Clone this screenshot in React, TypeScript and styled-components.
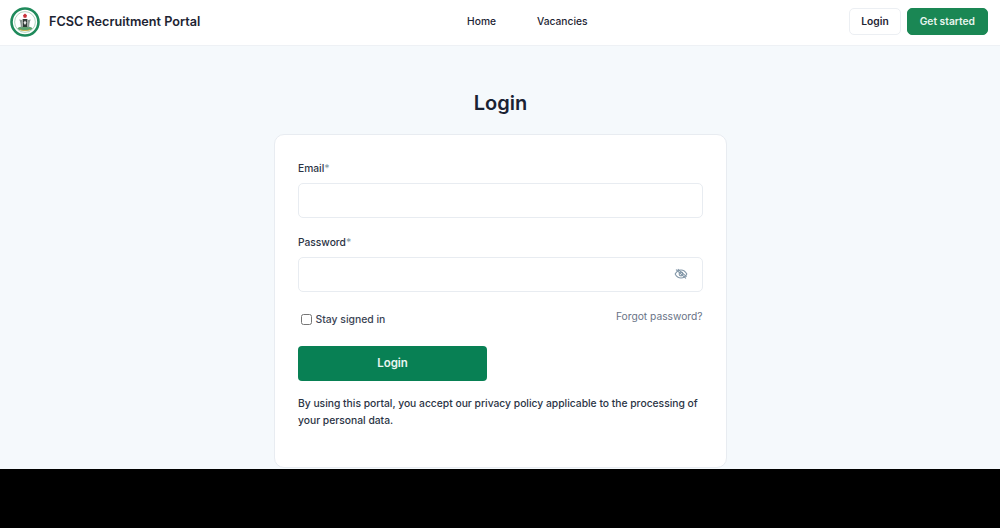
import React, { FC } from 'react';
import styled, { createGlobalStyle } from 'styled-components';

const GlobalStyle = createGlobalStyle`
  html, body {
    margin: 0;
    height: 100%;
    background: #000;
  }
  * {
    box-sizing: border-box;
  }
`;

const Page = styled.div`
  height: 469px;
  overflow: hidden;
  display: flex;
  flex-direction: column;
  background: #f5f9fc;
  font-family: Inter, "Liberation Sans", sans-serif;
  color: #1a2233;
`;

const Header = styled.header`
  height: 46px;
  flex: none;
  display: flex;
  justify-content: space-between;
  align-items: center;
  padding: 0 12px 2px 10px;
  background: #fff;
  border-bottom: 1px solid #eef1f5;
`;

const Brand = styled.div`
  display: flex;
  align-items: center;
  gap: 9px;
  font-size: 12.65px;
  font-weight: 600;
  color: #1d2433;
`;

const Nav = styled.nav`
  display: flex;
  gap: 41px;
  margin: 0 0 1px 5px;
  font-size: 10.24px;
  font-weight: 500;
  color: #1d2433;
`;

const Actions = styled.div`
  display: flex;
  gap: 6px;
`;

const HeaderButton = styled.button<{ $primary?: boolean }>`
  height: 27px;
  padding: 0 ${(p) => (p.$primary ? '12px' : '11px')} 1px;
  border-radius: 5px;
  border: 1px solid ${(p) => (p.$primary ? '#1a8754' : '#eceff3')};
  background: ${(p) => (p.$primary ? '#1a8754' : '#fff')};
  color: ${(p) => (p.$primary ? '#e8f5ee' : '#1d2433')};
  font-family: inherit;
  font-size: 10.24px;
  font-weight: 600;
`;

const Main = styled.main`
  display: flex;
  flex-direction: column;
  align-items: center;
  padding-top: 43px;
`;

const Title = styled.h1`
  margin: 0 0 16px 1px;
  font-size: 20px;
  line-height: 29px;
  font-weight: 600;
  color: #1a2233;
`;

const Card = styled.form`
  width: 453px;
  height: 334px;
  flex: none;
  padding: 25px 23px 0 23.5px;
  background: #fff;
  border: 1px solid #e8ecf1;
  border-radius: 10px;
`;

const Field = styled.div`
  margin-bottom: 16px;
`;

const Label = styled.label`
  display: block;
  margin-bottom: 6px;
  font-size: 10.24px;
  line-height: 17px;
  font-weight: 500;
  color: #2b3445;

  & > span {
    color: #8aa0a8;
  }
`;

const InputWrap = styled.div`
  position: relative;
`;

const Input = styled.input`
  display: block;
  width: 100%;
  height: 35px;
  border: 1px solid #e8ecf1;
  border-radius: 5px;
  background: #fff;
  outline: none;
`;

const EyeToggle = styled.span`
  position: absolute;
  right: 15px;
  top: 10px;
  display: flex;
  color: #8095a6;
`;

const OptionsRow = styled.div`
  display: flex;
  justify-content: space-between;
  align-items: flex-start;
  margin-top: -2px;
`;

const StayLabel = styled.label`
  display: flex;
  align-items: center;
  gap: 4px;
  padding: 5px 0 0 2.5px;
  font-size: 10.4px;
  line-height: 17px;
  font-weight: 500;
  color: #3a4354;
`;

const Checkbox = styled.input`
  width: 11px;
  height: 11px;
  margin: 0;
`;

const ForgotLink = styled.a`
  padding-top: 2px;
  font-size: 10.24px;
  line-height: 17px;
  color: #697386;
`;

const SubmitButton = styled.button`
  display: block;
  width: 189px;
  height: 35px;
  margin-top: 17.5px;
  padding: 0 0 1px;
  border: none;
  border-radius: 4px;
  background: #088054;
  color: #e9f6f0;
  font-family: inherit;
  font-size: 11.5px;
  font-weight: 600;
`;

const Notice = styled.p`
  margin: 14.5px 0 0;
  font-size: 10.3px;
  line-height: 16.5px;
  font-weight: 500;
  color: #2b3445;
`;

// rough redraw of the coat of arms badge
const CrestLogo: FC = () => (
  <svg width="30" height="30" viewBox="0 0 30 30" aria-hidden="true">
    <circle cx="15" cy="15" r="13.5" fill="#fff" stroke="#1f8a5b" strokeWidth="2.6" />
    <circle cx="15" cy="15" r="10.4" fill="#fff" stroke="#9cc9ae" strokeWidth="0.8" />
    <ellipse cx="15" cy="21.5" rx="7.5" ry="2" fill="#5da36f" />
    <path d="M12.6 12h4.8v8h-4.8z" fill="#2f3a35" />
    <path d="M15 13.4l1.5 2.3-1.5 2.3-1.5-2.3z" fill="#e6e6e6" />
    <path d="M9.2 12.5c1.2 2 1.6 5 1.6 8h1.4v-7.5z" fill="#8b9a94" />
    <path d="M20.8 12.5c-1.2 2-1.6 5-1.6 8h-1.4v-7.5z" fill="#8b9a94" />
    <path d="M13 8.2l2-1.6 2 1.6-.7 2.6h-2.6z" fill="#c8323a" />
    <path d="M10 22.7c3 1.2 7 1.2 10 0" fill="none" stroke="#d8a93a" strokeWidth="0.8" />
  </svg>
);

const EyeOffIcon: FC = () => (
  <svg width="14" height="14" viewBox="0 0 24 24" fill="none" stroke="currentColor" strokeWidth="1.8" strokeLinecap="round" strokeLinejoin="round" aria-hidden="true">
    <path d="M2 12s3.6-7 10-7 10 7 10 7-3.6 7-10 7-10-7-10-7z" />
    <circle cx="12" cy="12" r="3.2" />
    <path d="M4 5l16 14" />
    <path d="M7 4l14 12" />
  </svg>
);

const App: FC = () => (
  <>
    <GlobalStyle />
    <Page>
      <Header>
        <Brand>
          <CrestLogo />
          FCSC Recruitment Portal
        </Brand>
        <Nav>
          <span>Home</span>
          <span>Vacancies</span>
        </Nav>
        <Actions>
          <HeaderButton type="button">Login</HeaderButton>
          <HeaderButton type="button" $primary>Get started</HeaderButton>
        </Actions>
      </Header>
      <Main>
        <Title>Login</Title>
        <Card onSubmit={(e) => e.preventDefault()}>
          <Field>
            <Label>Email<span>*</span></Label>
            <Input type="email" />
          </Field>
          <Field>
            <Label>Password<span>*</span></Label>
            <InputWrap>
              <Input type="password" />
              <EyeToggle><EyeOffIcon /></EyeToggle>
            </InputWrap>
          </Field>
          <OptionsRow>
            <StayLabel>
              <Checkbox type="checkbox" />
              Stay signed in
            </StayLabel>
            <ForgotLink>Forgot password?</ForgotLink>
          </OptionsRow>
          <SubmitButton type="submit">Login</SubmitButton>
          <Notice>
            By using this portal, you accept our privacy policy applicable to the processing of your personal data.
          </Notice>
        </Card>
      </Main>
    </Page>
  </>
);

export default App;
